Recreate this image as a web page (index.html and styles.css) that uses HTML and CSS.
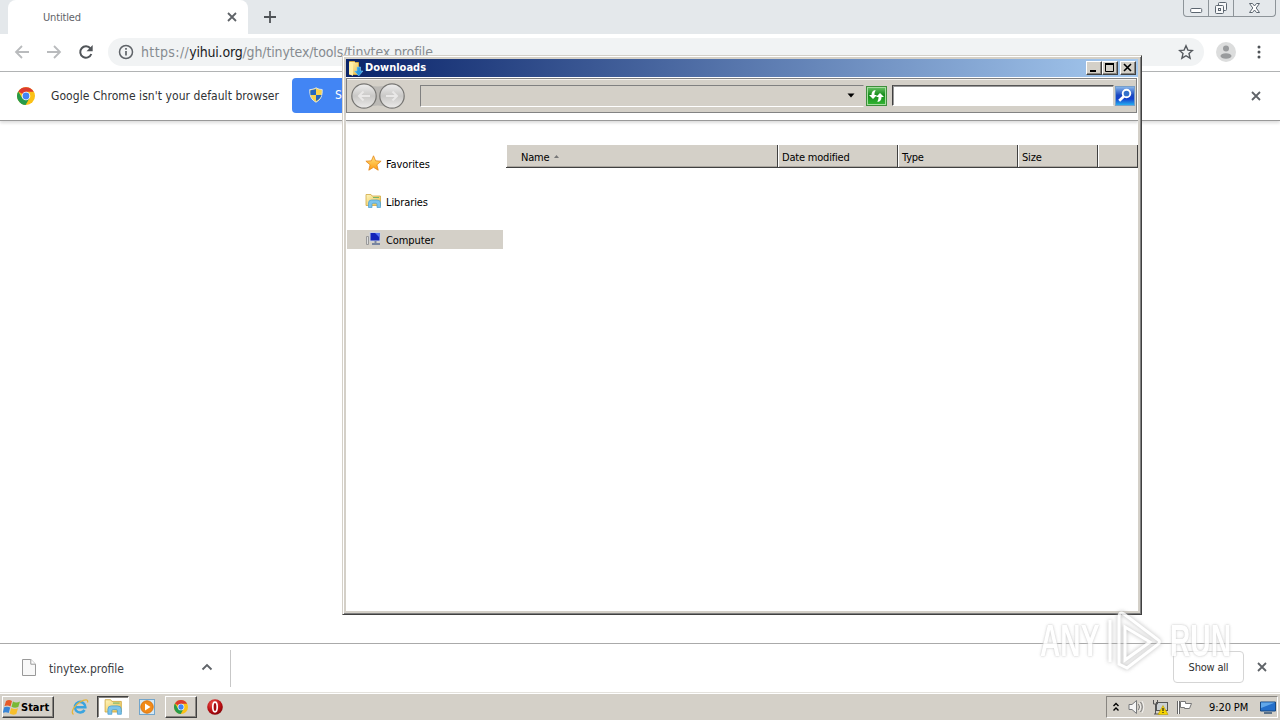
FILE: index.html
```html
<!DOCTYPE html>
<html lang="en">
<head>
<meta charset="utf-8">
<title>Desktop</title>
<link rel="stylesheet" href="styles.css">
</head>
<body>
<svg width="0" height="0" class="defs">
  <defs>
    <linearGradient id="folderG" x1="0" y1="0" x2="1" y2="1"><stop offset="0" stop-color="#fff6bd"/><stop offset="1" stop-color="#e9bd48"/></linearGradient>
    <linearGradient id="starG" x1="0" y1="0" x2="0" y2="1"><stop offset="0" stop-color="#ffe680"/><stop offset="1" stop-color="#ff9a10"/></linearGradient>
    <linearGradient id="greenG" x1="0" y1="0" x2="0" y2="1"><stop offset="0" stop-color="#6fc66c"/><stop offset=".45" stop-color="#168c1b"/><stop offset="1" stop-color="#35b936"/></linearGradient>
    <linearGradient id="blueG" x1="0" y1="0" x2="0" y2="1"><stop offset="0" stop-color="#8dbbed"/><stop offset=".45" stop-color="#1b48c0"/><stop offset=".65" stop-color="#1440cd"/><stop offset="1" stop-color="#27b6f2"/></linearGradient>
    <linearGradient id="navG" x1="0" y1="0" x2="0" y2="1"><stop offset="0" stop-color="#efefef"/><stop offset=".5" stop-color="#c9c8c6"/><stop offset="1" stop-color="#ecebea"/></linearGradient>
    <radialGradient id="operaG" cx=".4" cy=".3" r=".8"><stop offset="0" stop-color="#f25a50"/><stop offset=".6" stop-color="#b80d12"/><stop offset="1" stop-color="#720004"/></radialGradient>
    <symbol id="chrome" viewBox="0 0 18 18">
      <circle cx="9" cy="9" r="9" fill="#fbc116"/>
      <path d="M9 9 1.2 4.5A9 9 0 0 1 16.8 4.8H9Z" fill="#dc3b2f"/>
      <path d="M1.2 4.5A9 9 0 0 0 8.6 18l4-7L9 9 5.4 11.2Z" fill="#279b4a"/>
      <circle cx="9" cy="9" r="4.3" fill="#fff"/><circle cx="9" cy="9" r="3.4" fill="#4285f4"/>
    </symbol>
    <symbol id="close" viewBox="0 0 10 10"><path d="M1 1 9 9M9 1 1 9" stroke="#5f6368" stroke-width="1.8" fill="none"/></symbol>
    <symbol id="library" viewBox="0 0 17 16">
      <path d="M1 2V1.500h5l1 1.500h8.500V12.500H1Z" fill="url(#folderG)" stroke="#d0aa45" stroke-width=".8"/>
      <path d="M8 4.500h6" stroke="#76b76d"/>
      <path d="M3.500 14.500V10Q3.500 7 6.500 7h5.500Q15.500 7 15.500 10v4.500h-3.500V11.500q0-1.200-1.200-1.200H8.200Q7 10.300 7 11.500v3Z" fill="#7cc4ec" stroke="#4a9fd0" stroke-width=".7"/>
    </symbol>
  </defs>
</svg>
<div class="desktop">
  <main class="browser">
    <header class="tabstrip">
      <div class="tab"><span class="tab-title">Untitled</span><svg class="tab-close"><use href="#close"/></svg></div>
      <svg class="new-tab" viewBox="0 0 12 12"><path d="M6 0v12M0 6h12" stroke="#4f5357" stroke-width="1.8"/></svg>
      <div class="caption">
        <div><svg width="13" height="7"><rect x=".7" y="1.500" width="11" height="4" rx="1" fill="#fff" stroke="#5c6670"/></svg></div>
        <div><svg width="14" height="14" fill="#f7f8f9" stroke="#5c6670"><rect x="4.500" y="1.500" width="8" height="8" rx="1"/><rect x="1.500" y="4.500" width="8" height="8" rx="1"/><rect x="4.500" y="7.500" width="2" height="2"/></svg></div>
        <div><svg width="13" height="12"><path d="M1.500 1.500h3L6.500 4l2-2.500h3L8.200 6l3.300 4.500h-3L6.500 8l-2 2.500h-3L4.800 6Z" fill="#fff" stroke="#5c6670"/></svg></div>
      </div>
    </header>
    <div class="toolbar">
      <svg class="tool back" viewBox="0 0 16 16"><path d="M15 8H2M8 2 2 8l6 6" fill="none" stroke="#b9bbbd" stroke-width="1.800"/></svg>
      <svg class="tool" viewBox="0 0 16 16"><path d="M1 8h13M8 2l6 6-6 6" fill="none" stroke="#b9bbbd" stroke-width="1.800"/></svg>
      <svg class="tool" viewBox="0 0 16 16"><path d="M13.300 10A5.700 5.700 0 1 1 12.500 4.600" fill="none" stroke="#515559" stroke-width="2"/><path d="M14.700 1v6.200H8.500Z" fill="#515559"/></svg>
      <div class="omnibox">
        <svg width="16" height="16"><circle cx="8" cy="8" r="6.500" fill="none" stroke="#5f6368" stroke-width="1.500"/><path d="M8 7v4.500M8 4v1.700" stroke="#5f6368" stroke-width="1.700"/></svg>
        <div class="url"><span class="scheme">https://</span><b>yihui.org</b>/gh/tinytex/tools/tinytex.profile</div>
        <svg class="bookmark" viewBox="0 0 16 16"><path d="m8 1.800 1.900 4.300 4.600.4L11 9.600l1.100 4.600L8 11.700l-4.100 2.500L5 9.600 1.500 6.500l4.600-.4Z" fill="none" stroke="#55595e" stroke-width="1.400"/></svg>
      </div>
      <svg class="avatar" viewBox="0 0 20 20"><circle cx="10" cy="10" r="10" fill="#dcdddd"/><circle cx="10" cy="6.500" r="3" fill="#999b9d"/><ellipse cx="10" cy="14" rx="5.500" ry="2.800" fill="#999b9d"/></svg>
      <svg class="kebab" viewBox="0 0 4 14"><g fill="#4f5357"><circle cx="2" cy="2" r="1.500"/><circle cx="2" cy="7" r="1.500"/><circle cx="2" cy="12" r="1.500"/></g></svg>
    </div>
    <div class="infobar">
      <svg class="info-logo"><use href="#chrome"/></svg>
      <span class="info-text">Google Chrome isn't your default browser</span>
      <button class="default-btn"><svg width="14" height="16"><path d="M7 .8Q10 2.700 13.200 2.500C13.500 9 11.500 13 7 15.200 2.500 13 .5 9 .8 2.500 4 2.700 7 .8 7 .8Z" fill="#f8d24d" stroke="#d7e2e8"/><path d="M7 2v6H1.500Q1 5 1.500 3.300 5 3 7 2M7 8h5.500Q11 12.500 7 14Z" fill="#2466bd"/></svg><span>Set as default</span></button>
      <svg class="info-close"><use href="#close"/></svg>
    </div>
    <section class="page"></section>
    <footer class="downloads">
      <div class="download-item">
        <svg width="14" height="17"><path d="M.5.500h8.300l4.700 4.700v11.300H.5Z" fill="#f8f8f8" stroke="#999"/><path d="M8.800.500v4.700h4.700" fill="#fff" stroke="#999"/></svg>
        <span class="file-name">tinytex.profile</span>
        <svg class="chevron" viewBox="0 0 12 8"><path d="m1.500 6.500 4.500-4.500 4.500 4.500" stroke="#5f6368" stroke-width="1.800" fill="none"/></svg>
      </div>
      <button class="show-all">Show all</button>
      <svg class="shelf-close"><use href="#close"/></svg>
    </footer>
  </main>
  <nav class="taskbar">
    <button class="raised start"><svg width="18" height="17" viewBox="0 0 18 17"><path d="M3 2q3-2 6 0L7.500 7.500Q5 6 1.500 7Z" fill="#e75b28"/><path d="M10 2.500q3 2 7 0L15.300 8q-3.500 1.500-6.800-.2Z" fill="#79b936"/><path d="M1.200 8.300q3-1.300 6 .3L5.700 14q-3-1.500-6 0Z" fill="#3985d6"/><path d="M8.200 9q3.500 1.700 6.800.2L13.300 15q-3.500 1.500-6.700-.5Z" fill="#f7bf2b"/></svg><span>Start</span></button>
    <svg class="ie" viewBox="0 0 18 18"><path d="M13.600 12A5.300 5.300 0 1 1 14.400 9.300H5" fill="none" stroke="#3aa4df" stroke-width="2.500"/><path d="M2.500 16.500C-1 14 4 7 9 4s8.500-3 7.500.5" fill="none" stroke="#e5b53c" stroke-width="1.300"/></svg>
    <div class="raised task pressed"><svg width="19" height="18"><use href="#library"/></svg></div>
    <svg class="media" viewBox="0 0 16 16"><rect x=".5" y=".5" width="15" height="15" fill="#d4e8f5" stroke="#72a5cb"/><circle cx="8" cy="8" r="6.200" fill="#f28a18" stroke="#d87612"/><path d="m6 4.500 5.500 3.500L6 11.500Z" fill="#fff"/></svg>
    <div class="raised task"><svg width="14" height="14"><use href="#chrome"/></svg></div>
    <svg class="opera" viewBox="0 0 16 16"><circle cx="8" cy="8" r="7.800" fill="url(#operaG)"/><ellipse cx="8" cy="8" rx="2.200" ry="4.800" fill="#a50b10" stroke="#fff" stroke-width="1.700"/></svg>
    <div class="tray">
      <svg class="expand" viewBox="0 0 8 10"><path d="m1.500 4 2.500-2.500L6.500 4M1.500 8.500 4 6l2.500 2.500" fill="none" stroke="#000" stroke-width="1.400"/></svg>
      <svg width="17" height="16"><path d="M1 5.500h3L8.500 1.500v13L4 10.500H1Z" fill="#f5f5f5" stroke="#77797b"/><path d="M10.500 5q2 3 0 6M12.500 3q3.500 5 0 10" fill="none" stroke="#777"/><path d="M11.500 4q2.500 4 0 8M14 2q3.500 6 0 12" fill="none" stroke="#fff" stroke-width=".7"/></svg>
      <svg width="17" height="16"><rect x="4.500" y="3.500" width="11" height="8" fill="#cbd0d2" stroke="#555"/><path d="M1.500 1v4h4V1M3.500 5v10M2 15h6" fill="none" stroke="#555"/><path d="m11 6.500 5 9H6Z" fill="#f6d500" stroke="#b79a00" stroke-width=".6"/><path d="M11 9v3M11 13v1" stroke="#222" stroke-width="1.200"/></svg>
      <svg width="17" height="16"><path d="M2.500 2v13" stroke="#666" stroke-width="3"/><path d="M2.500 2v13" stroke="#fff"/><path d="M4.500 2.500h5v2h6l-2 5h-5v-1h-4Z" fill="#fff" stroke="#777"/></svg>
      <span class="clock">9:20 PM</span>
      <svg class="show-desktop" viewBox="0 0 16 14"><path d="M.5 2h15v9H.5Z" fill="#246fca" stroke="#174881"/><path d="M1 2.500h14L1 8Z" fill="#61a7e9"/><path d="M4 13h8" stroke="#335374" stroke-width="1.500"/></svg>
    </div>
  </nav>

  <section class="explorer">
    <header class="titlebar">
      <svg width="17" height="17"><path d="M2.500 1.500h5l1 1h3v12h-9Z" fill="url(#folderG)" stroke="#d2a942"/><path d="M2 2l4 2v12l-4-2Z" fill="#fff0a7"/><path d="M10 7h3.500v4h2.500l-4.300 5L7.500 11H10Z" fill="#2b9ae3" stroke="#81ccf4" stroke-width=".6"/></svg>
      <strong>Downloads</strong>
      <div class="buttons">
        <i class="raised"><svg viewBox="0 0 12 10"><path d="M2 8h6" stroke="#000" stroke-width="2"/></svg></i>
        <i class="raised"><svg viewBox="0 0 12 10"><path d="M1.500 1v7.500h8V1" stroke="#000" fill="none"/><path d="M1 1h9" stroke="#000" stroke-width="2"/></svg></i>
        <i class="raised"><svg viewBox="0 0 12 10"><path d="m2 1 7 7M9 1 2 8" stroke="#000" stroke-width="1.600"/></svg></i>
      </div>
    </header>
    <div class="explorer-toolbar">
      <svg class="nav-pair" viewBox="0 0 56 28"><path d="M13 2Q28 7 42 2v24Q28 21 13 26Z" fill="#bbb9b5"/><g fill="url(#navG)" stroke="#777673" stroke-width="1.200"><circle cx="14" cy="14" r="12.200"/><circle cx="42" cy="14" r="12.200"/></g><g fill="none" stroke="#e9e8e7" stroke-width="2"><path d="M20 14H9M13.500 9.500 9 14l4.500 4.500M36 14h11M42.500 9.500 47 14l-4.500 4.500"/></g></svg>
      <div class="address"><svg width="8" height="5"><path d="M.5.500h7l-3.500 4Z"/></svg></div>
      <svg class="refresh" viewBox="0 0 21 20"><rect x=".5" y=".5" width="20" height="19" fill="url(#greenG)" stroke="#3e8f3c"/><rect x="1.500" y="1.500" width="18" height="17" fill="none" stroke="#a5dda0"/><path d="M9.500 4Q5.500 4.500 5.500 9H3l4 4 4-4H8.500Q8.300 6.500 9.500 4.500ZM11.500 16q4-.5 4-5H18l-4-4-4 4h2.500Q12.700 13.500 11.500 15.500Z" fill="#fff"/></svg>
      <div class="search"></div>
      <svg class="magnify" viewBox="0 0 20 20"><rect x=".5" y=".5" width="19" height="19" fill="url(#blueG)" stroke="#789fc9"/><circle cx="11.500" cy="7.500" r="3.800" fill="#326fca" stroke="#fff" stroke-width="1.900"/><path d="m8.700 10.500-4.500 4.300" stroke="#fff" stroke-width="2.700"/></svg>
    </div>
    <div class="command-space"></div>
    <div class="explorer-content">
      <aside>
        <div class="place"><svg width="17" height="16"><path d="m8.500.800 2.100 5 5.500.4-4.200 3.600 1.300 5.400-4.700-2.900-4.700 2.900 1.300-5.400L.900 6.200l5.500-.4Z" fill="url(#starG)" stroke="#e4861b" stroke-width=".8"/></svg><span>Favorites</span></div>
        <div class="place"><svg width="17" height="16"><use href="#library"/></svg><span>Libraries</span></div>
        <div class="place selected"><svg width="17" height="16"><rect x="5" y="1.500" width="10" height="8.500" fill="#1324b9" stroke="#c9d1e2"/><path d="M10 2h4.500v4.500Z" fill="#5575f2"/><path d="M7 13h8M10.500 10v3" stroke="#7885a0" stroke-width="2"/><path d="M1.500 5.500h2v8h-2Z" fill="#ddd" stroke="#999"/></svg><span>Computer</span></div>
      </aside>
      <div class="columns"><div class="name">Name <svg width="5" height="3"><path d="M2.500 0 5 3H0Z" fill="#777"/></svg></div><div>Date modified</div><div>Type</div><div>Size</div><div></div></div>
    </div>
  </section>
  <div class="watermark"><span>ANY</span><svg viewBox="0 0 60 64"><path d="M5 11v42M14 8v47l8 4 30-23q5-3 0-6L19 5Q14 2 14 8ZM20 18l25 15-25 18Z"/></svg><span>RUN</span></div>
</div>
</body>
</html>
```
FILE: styles.css
```css
* { box-sizing: border-box; }
body { margin: 0; overflow: hidden; font: 11px "DejaVu Sans Condensed", "DejaVu Sans", sans-serif; font-stretch: condensed; color: #000; }
button { margin: 0; font: inherit; }
svg { flex: none; }
.defs { position: absolute; }
.desktop { position: relative; width: 1280px; height: 720px; display: flex; flex-direction: column; background: #fff; }
.browser { flex: 1; display: flex; flex-direction: column; min-height: 0; }
.tabstrip { height: 34px; background: radial-gradient(circle at 0 26px, transparent 7.5px, #fff 8px) 0 0 / 0 0 no-repeat, #e4e8eb; display: flex; padding-left: 8px; }
.tab { width: 240px; height: 34px; display: flex; align-items: center; padding: 0 11px 0 35px; background: #fff; border-radius: 8px 8px 0 0; color: #5f6368; }
.tab-title { flex: 1; letter-spacing: -.15px; }
.tab-close { width: 10px; height: 10px; }
.new-tab { width: 12px; height: 12px; margin: 11px 0 0 16px; }
.caption { display: flex; height: 17px; margin: 0 4px 0 auto; border: 1px solid #8d9499; border-top: 0; border-radius: 0 0 4px 4px; }
.caption div { width: 25px; display: flex; align-items: center; justify-content: center; border-right: 1px solid #8d9499; }
.caption div:first-child { padding-top: 5px; }
.caption div:last-child { width: 41px; border: 0; }
.toolbar { height: 38px; border-bottom: 1px solid #aeb0b2; display: flex; align-items: center; padding: 0 19px 2px 14px; }
.tool { width: 16px; height: 16px; margin-right: 16px; }
.toolbar .tool:nth-child(3) { margin-right: 14px; }
.omnibox { width: 1096px; height: 28px; border-radius: 14px; background: #f1f3f4; display: flex; align-items: center; padding: 0 10px; }
.url { flex: 1; margin-left: 7px; font: 14px "DejaVu Sans Condensed", sans-serif; font-weight: 200; color: #868b90; letter-spacing: -.13px; white-space: nowrap; }
.scheme { letter-spacing: .38px; }
.url b { color: #202124; font-weight: inherit; letter-spacing: -.2px; }
.bookmark { width: 16px; height: 16px; }
.avatar { width: 20px; height: 20px; margin-left: 12px; }
.kebab { width: 4px; height: 14px; margin-left: auto; }
.infobar { height: 49px; border-bottom: 1px solid #999; box-shadow: 0 2px 3px #ddd; display: flex; align-items: center; padding: 0 19px 0 17px; }
.info-logo { width: 18px; height: 18px; }
.info-text { width: 241px; margin-left: 16px; font-size: 12px; letter-spacing: .06px; white-space: nowrap; color: #303234; }
.default-btn { width: 130px; height: 35px; margin-bottom: 2px; border: 0; border-radius: 4px; background: #4285f4; color: #fff; display: flex; align-items: center; gap: 12px; padding: 0 17px; font-size: 12px; white-space: nowrap; }
.info-close { width: 10px; height: 10px; margin-left: auto; }
.page { flex: 1; }
.downloads { height: 50px; border-top: 1px solid #aaa; border-bottom: 1px solid #e4e2dd; display: flex; align-items: center; padding-right: 13px; }
.download-item { width: 231px; height: 37px; border-right: 1px solid #c7c7c7; display: flex; align-items: center; padding: 0 17px 2px 22px; }
.file-name { margin: 4px auto 0 13px; font-size: 12px; color: #3c4043; }
.chevron { width: 12px; height: 8px; }
.show-all { width: 71px; height: 32px; border: 1px solid #d5d5d5; border-radius: 4px; margin: 0 13px 2px auto; background: #fff; padding: 0; color: #303030; letter-spacing: -.2px; }
.shelf-close { width: 10px; height: 10px; margin-bottom: 2px; }
.taskbar { height: 27px; border-top: 1px solid #fff; background: #d4d0c8; display: flex; align-items: center; padding: 0 2px; }
.raised { border: 1px solid; border-color: #fff #404040 #404040 #fff; box-shadow: inset -1px -1px #888580; background: #d4d0c8; }
.start { width: 52px; height: 22px; padding: 0 2px; display: flex; align-items: center; gap: 0; font-weight: bold; }
.start svg { margin-left: -2px; }
.start span { letter-spacing: 0; }
.ie { width: 18px; height: 18px; margin: 0 8px 0 17px; }
.task { width: 32px; height: 22px; display: grid; place-items: center; }
.pressed { border-color: #404040 #fff #fff #404040; background: #fff; box-shadow: inset 1px 1px #888580; }
.media { width: 16px; height: 16px; margin: 0 10px; }
.opera { width: 16px; height: 16px; margin-left: 10px; }
.tray { width: 172px; height: 22px; margin-left: auto; border: 1px solid; border-color: #888580 #fff #fff #888580; display: flex; align-items: center; padding: 0 1px 0 5px; }
.expand { width: 8px; height: 10px; margin-right: 8px; }
.tray svg:nth-child(2), .tray svg:nth-child(3) { margin-right: 7px; }
.clock { margin-left: 16px; white-space: nowrap; letter-spacing: -.1px; }
.show-desktop { width: 16px; height: 14px; margin-left: auto; }
.explorer { position: absolute; left: 342px; top: 55px; width: 800px; height: 560px; padding: 3px; border: 1px solid; border-color: #d4d0c8 #404040 #404040 #d4d0c8; background: #fff; box-shadow: inset 1px 1px #fff, inset -1px -1px #808080, inset 3px 3px #d4d0c8, inset -3px -3px #d4d0c8; }
.titlebar { width: 792px; height: 18px; display: flex; align-items: center; background: linear-gradient(90deg, #0a246a, #a6caf0); color: #fff; padding: 0 2px; }
.titlebar svg { margin-left: -1px; }
.titlebar strong { margin-left: 1px; line-height: 14px; letter-spacing: 0; }
.buttons { margin-left: auto; display: flex; }
.buttons i { width: 16px; height: 14px; display: grid; place-items: center; }
.buttons i:last-child { margin-left: 2px; }
.buttons svg { width: 12px; height: 10px; }
.explorer-toolbar { width: 791px; height: 35px; margin-top: 1px; border: 1px solid #808080; background: #d4d0c8; display: flex; align-items: center; padding: 0 0 0 3px; box-shadow: inset 0 1px #f4f2ef; }
.nav-pair { width: 56px; height: 28px; }
.address { width: 444px; height: 22px; margin-left: 14px; border: 1px solid; border-color: #808080 transparent #fff #808080; display: flex; align-items: center; justify-content: flex-end; padding-right: 8px; }
.refresh { width: 21px; height: 20px; margin-left: 2px; }
.search { width: 222px; height: 21px; margin-left: 5px; background: #fff; border: 1px solid; border-color: #555 #d4d0c8 #fff #404040; box-shadow: inset 1px 1px #999; }
.magnify { width: 20px; height: 20px; margin-left: 1px; }
.command-space { width: 792px; height: 8px; border-bottom: 1px solid #999; box-shadow: 0 2px 3px #ddd; }
.explorer-content { display: flex; align-items: flex-start; padding-top: 24px; }
aside { width: 160px; padding: 9px 3px 0 1px; }
.place { height: 19px; margin-bottom: 19px; display: flex; align-items: center; padding-left: 18px; gap: 4px; }
.place svg { margin-bottom: 2px; }
.place span { padding-top: 2px; letter-spacing: -.1px; }
.selected { background: #d4d0c8; }
.columns { display: grid; grid-template-columns: 272px 120px 120px 80px 40px; height: 23px; background: #d4d0c8; border-bottom: 1px solid #404040; box-shadow: inset 0 -1px #aaa69f; }
.columns div { padding: 6px 3px 0; border-right: 1px solid #404040; border-left: 1px solid #fff; line-height: 13px; white-space: nowrap; letter-spacing: -.2px; }
.columns .name { padding-left: 14px; }
.name svg { margin: 0 0 3px 2px; }
.watermark { position: absolute; left: 1040px; top: 609px; display: flex; align-items: center; height: 64px; opacity: .85; font: bold 44px/40px "Liberation Sans", sans-serif; color: #fff; text-shadow: 0 0 2px #c4c4c4, 0 0 4px #d0d0d0; }
.watermark span { width: 62px; transform: scaleX(.64); transform-origin: left; }
.watermark svg { width: 60px; height: 64px; margin: 0 5px 0 3px; fill: none; stroke: #fff; stroke-width: 3; filter: drop-shadow(0 0 2px #aaa); }
```
